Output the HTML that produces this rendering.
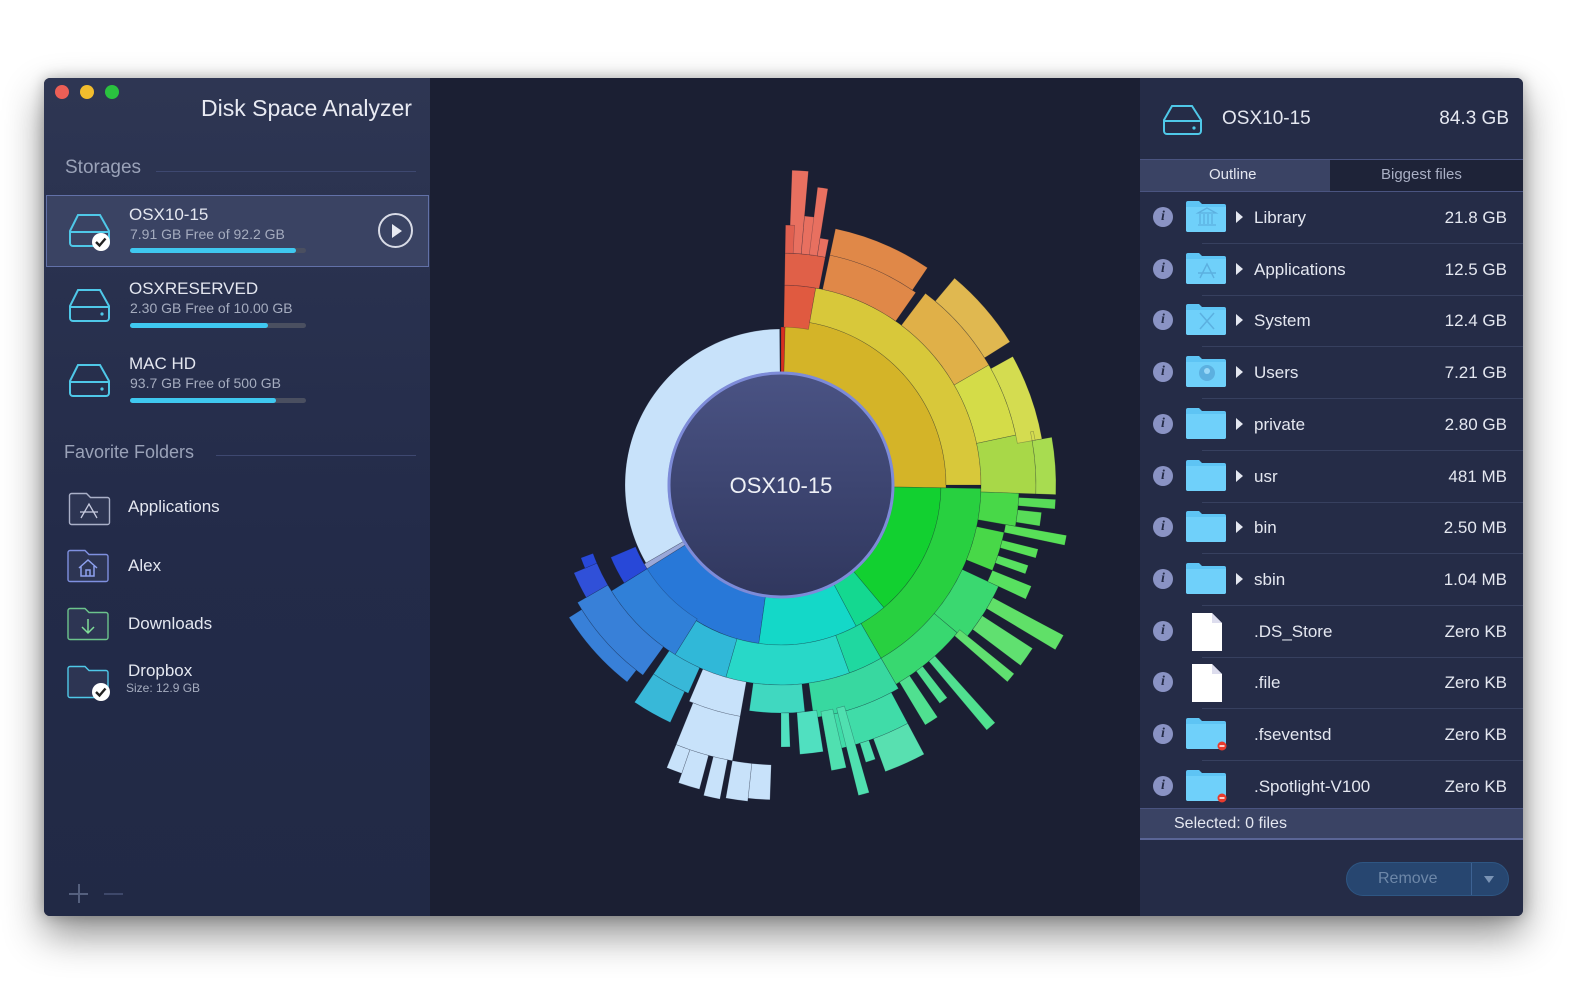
<!DOCTYPE html>
<html><head><meta charset="utf-8">
<style>
*{margin:0;padding:0;box-sizing:border-box}
body{width:1584px;height:1000px;background:#fff;font-family:"Liberation Sans",sans-serif;position:relative;overflow:hidden}
#win{position:absolute;left:44px;top:78px;width:1479px;height:838px;border-radius:6px;overflow:hidden;background:#1b1f33;box-shadow:0 18px 40px rgba(0,0,0,.45),0 0 14px rgba(0,0,0,.25)}
#side{position:absolute;left:0;top:0;width:386px;height:838px;background:linear-gradient(#2e3653,#232b49 55%,#212945)}
.dot{position:absolute;top:7px;width:14px;height:14px;border-radius:50%}
.t{position:absolute;color:#e4e7f0;white-space:nowrap}
.sec{position:absolute;color:#9aa2b8;font-size:19px}
.line{position:absolute;height:1px;background:#3e4870}
.bar{position:absolute;left:86px;width:176px;height:5px;border-radius:3px;background:#4a4f60}
.bar i{display:block;height:5px;border-radius:3px;background:#3fc8f0}
#right{position:absolute;left:1096px;top:0;width:383px;height:838px;background:#252c47}
.row{position:absolute;left:0;width:383px;height:52px}
.row .sep{position:absolute;left:62px;right:0;bottom:0;height:1px;background:#37405f}
.info{position:absolute;left:13px;top:15px;width:20px;height:20px;border-radius:50%;background:#8a93c4;color:#252c47;font:italic bold 14px "Liberation Serif",serif;text-align:center;line-height:20px}
.nm{position:absolute;left:114px;top:16px;font-size:17px;color:#e4e7f0}
.sz{position:absolute;right:16px;top:16px;font-size:17px;color:#e4e7f0}
.tri{position:absolute;left:96px;top:19px;width:0;height:0;border-left:7px solid #e4e7f0;border-top:6px solid transparent;border-bottom:6px solid transparent}
</style></head><body>
<div id="win">
 <div id="side">
  <div class="dot" style="left:11px;background:#ec5f56"></div>
  <div class="dot" style="left:36px;background:#f2bd2d"></div>
  <div class="dot" style="left:61px;background:#2ac23f"></div>
  <div class="t" style="left:157px;top:17px;font-size:23px;color:#e8eaf2">Disk Space Analyzer</div>
  <div class="sec" style="left:21px;top:79px">Storages</div>
  <div class="line" style="left:112px;top:93px;width:260px"></div>
  <div style="position:absolute;left:2px;top:117px;width:383px;height:72px;background:#3a4363;border:1px solid #6271a8"></div>
  <svg style="position:absolute;left:24px;top:134px" width="46" height="40"><path d="M10 3h22l9 16v12a3 3 0 0 1-3 3H5a3 3 0 0 1-3-3V19z M2 20h39" fill="#3a4363" stroke="#4fc8e8" stroke-width="2"/><circle cx="33" cy="30" r="9" fill="#fff"/><path d="M28 30l3.5 3.5 6-7" stroke="#222" stroke-width="2.4" fill="none"/></svg>
  <div class="t" style="left:85px;top:127px;font-size:17px">OSX10-15</div>
  <div class="t" style="left:86px;top:148px;font-size:14px;color:#a5acbf">7.91 GB Free of 92.2 GB</div>
  <div class="bar" style="top:170px"><i style="width:166px"></i></div>
  <div style="position:absolute;left:334px;top:135px;width:35px;height:35px;border-radius:50%;border:2px solid #d8dbe6"></div>
  <div style="position:absolute;left:348px;top:146px;border-left:10px solid #e8eaf2;border-top:7px solid transparent;border-bottom:7px solid transparent"></div>

  <svg style="position:absolute;left:24px;top:209px" width="46" height="36"><path d="M10 3h22l9 16v12a3 3 0 0 1-3 3H5a3 3 0 0 1-3-3V19z M2 20h39" fill="none" stroke="#4fc8e8" stroke-width="2"/><circle cx="34" cy="27" r="1.6" fill="#4fc8e8"/></svg>
  <div class="t" style="left:85px;top:201px;font-size:17px">OSXRESERVED</div>
  <div class="t" style="left:86px;top:222px;font-size:14px;color:#a5acbf">2.30 GB Free of 10.00 GB</div>
  <div class="bar" style="top:245px"><i style="width:138px"></i></div>

  <svg style="position:absolute;left:24px;top:284px" width="46" height="36"><path d="M10 3h22l9 16v12a3 3 0 0 1-3 3H5a3 3 0 0 1-3-3V19z M2 20h39" fill="none" stroke="#4fc8e8" stroke-width="2"/><circle cx="34" cy="27" r="1.6" fill="#4fc8e8"/></svg>
  <div class="t" style="left:85px;top:276px;font-size:17px">MAC HD</div>
  <div class="t" style="left:86px;top:297px;font-size:14px;color:#a5acbf">93.7 GB Free of 500 GB</div>
  <div class="bar" style="top:320px"><i style="width:146px"></i></div>

  <div class="sec" style="left:20px;top:364px;font-size:18px">Favorite Folders</div>
  <div class="line" style="left:172px;top:377px;width:200px"></div>

  <svg style="position:absolute;left:24px;top:414px" width="44" height="34"><path d="M1.5 3.5a2 2 0 0 1 2-2h15l4 4h17a2 2 0 0 1 2 2v23a2 2 0 0 1-2 2h-36a2 2 0 0 1-2-2z" fill="#2d3553" stroke="#aab0c8" stroke-width="1.4"/><path d="M13 26l8-14 8 14M12 20h18" stroke="#c8cce0" stroke-width="1.3" fill="none"/></svg>
  <div class="t" style="left:84px;top:419px;font-size:17px">Applications</div>
  <svg style="position:absolute;left:22px;top:471px" width="46" height="34"><path d="M2 3.5a2 2 0 0 1 2-2h15l4 4h17a2 2 0 0 1 2 2v23a2 2 0 0 1-2 2h-36a2 2 0 0 1-2-2z" fill="#2d3553" stroke="#7f90e0" stroke-width="1.4"/><path d="M13 19l9-8 9 8M15 17v10h13V17M20 27v-6h4v6" stroke="#8da0ee" stroke-width="1.5" fill="none"/></svg>
  <div class="t" style="left:84px;top:478px;font-size:17px">Alex</div>
  <svg style="position:absolute;left:22px;top:529px" width="46" height="34"><path d="M2 3.5a2 2 0 0 1 2-2h15l4 4h17a2 2 0 0 1 2 2v23a2 2 0 0 1-2 2h-36a2 2 0 0 1-2-2z" fill="#2d3553" stroke="#6cc48c" stroke-width="1.4"/><path d="M22 12v14M16 20l6 6 6-6" stroke="#7fdc98" stroke-width="1.5" fill="none"/></svg>
  <div class="t" style="left:84px;top:536px;font-size:17px">Downloads</div>
  <svg style="position:absolute;left:22px;top:587px" width="48" height="38"><path d="M2 3.5a2 2 0 0 1 2-2h15l4 4h17a2 2 0 0 1 2 2v23a2 2 0 0 1-2 2h-36a2 2 0 0 1-2-2z" fill="#2d3553" stroke="#4fc8e8" stroke-width="1.4"/><circle cx="35" cy="27" r="9" fill="#fff"/><path d="M30 27l3.5 3.5 6-7" stroke="#222" stroke-width="2.4" fill="none"/></svg>
  <div class="t" style="left:84px;top:583px;font-size:17px">Dropbox</div>
  <div class="t" style="left:82px;top:603px;font-size:12px;color:#a5acbf">Size: 12.9 GB</div>
  <div style="position:absolute;left:25px;top:815px;width:19px;height:1.5px;background:#55607e"></div>
  <div style="position:absolute;left:34px;top:806px;width:1.5px;height:19px;background:#55607e"></div>
  <div style="position:absolute;left:60px;top:815px;width:19px;height:1.5px;background:#3e486a"></div>
 </div>

 <svg id="chart" style="position:absolute;left:0;top:0" width="1096" height="838"></svg>

 <div id="right">
  <svg style="position:absolute;left:22px;top:26px" width="42" height="32"><path d="M10 2h20l9 14v11a3 3 0 0 1-3 3H5a3 3 0 0 1-3-3V16z M2 17h37" fill="none" stroke="#4fc8e8" stroke-width="2"/><circle cx="32" cy="24" r="1.6" fill="#4fc8e8"/></svg>
  <div class="t" style="left:82px;top:30px;font-size:19px">OSX10-15</div>
  <div class="t" style="right:14px;top:30px;font-size:19px">84.3 GB</div>
  <div style="position:absolute;left:0;top:81px;width:383px;height:1px;background:#4a5480"></div>
  <div style="position:absolute;left:0;top:82px;width:190px;height:31px;background:#3a4364"></div>
  <div style="position:absolute;left:190px;top:82px;width:193px;height:31px;background:#1e2338"></div>
  <div class="t" style="left:69px;top:88px;font-size:15px">Outline</div>
  <div class="t" style="left:241px;top:88px;font-size:15px;color:#a9afc4">Biggest files</div>
  <div style="position:absolute;left:0;top:113px;width:383px;height:1px;background:#4a5480"></div>
  <div id="rows"></div>
  <div style="position:absolute;left:0;top:730px;width:383px;height:32px;background:#3a4364;border-top:1px solid #4a5480;border-bottom:2px solid #5a6596"></div>
  <div class="t" style="left:34px;top:737px;font-size:16px">Selected: 0 files</div>
  <div style="position:absolute;left:206px;top:784px;width:163px;height:34px;border-radius:17px;background:#274670;border:1px solid #2e5683"></div>
  <div style="position:absolute;left:331px;top:785px;width:1px;height:32px;background:#3d6293"></div>
  <div class="t" style="left:238px;top:792px;font-size:16px;color:#6d87a8">Remove</div>
  <div style="position:absolute;left:344px;top:798px;border-top:7px solid #7a93b4;border-left:5px solid transparent;border-right:5px solid transparent"></div>
 </div>
</div>
<script>
var rows=[["Library","21.8 GB","f","lib"],["Applications","12.5 GB","f","app"],["System","12.4 GB","f","x"],["Users","7.21 GB","f","u"],["private","2.80 GB","f"],["usr","481 MB","f"],["bin","2.50 MB","f"],["sbin","1.04 MB","f"],[".DS_Store","Zero KB","d"],[".file","Zero KB","d"],[".fseventsd","Zero KB","r"],[".Spotlight-V100","Zero KB","r"]];
var h="";
rows.forEach(function(r,i){
 var top=114+i*51.7;
 var ic="";
 if(r[2]=="d"){ic='<svg style="position:absolute;left:50px;top:6px" width="34" height="40"><path d="M2 1h20l10 10v28H2z" fill="#fff"/><path d="M22 1v10h10" fill="#dde" /></svg>';}
 else{
  var g="";
  if(r[3]=="lib")g='<path d="M13 13h16M14 14v10M18 14v10M22 14v10M26 14v10M12 25h18M21 8l-9 5h18z" stroke="#5cb0e0" stroke-width="1.3" fill="none"/>';
  if(r[3]=="app")g='<path d="M14 26l7-14 7 14M12 21h18" stroke="#5cb0e0" stroke-width="1.4" fill="none"/>';
  if(r[3]=="x")g='<path d="M14 10l14 16M28 10l-14 16" stroke="#5cb0e0" stroke-width="1.5"/>';
  if(r[3]=="u")g='<circle cx="21" cy="18" r="8" fill="#5cb0e0"/><circle cx="21" cy="16" r="3" fill="#9ad8f8"/>';
  if(r[2]=="r")g='<circle cx="36" cy="29" r="4.5" fill="#e83a2c"/><path d="M33.5 29h5" stroke="#fff" stroke-width="1.5"/>';
  ic='<svg style="position:absolute;left:46px;top:8px" width="42" height="36"><path d="M0 3a2 2 0 0 1 2-2h11l3 3h22a2 2 0 0 1 2 2v24a2 2 0 0 1-2 2H2a2 2 0 0 1-2-2z" fill="#5ec4f4"/><path d="M0 7h40v23a2 2 0 0 1-2 2H2a2 2 0 0 1-2-2z" fill="#6fd0fa"/>'+g+'</svg>';
 }
 h+='<div class="row" style="top:'+top+'px"><div class="info">i</div>'+ic+(r[2]=="f"?'<div class="tri"></div>':'')+'<div class="nm">'+r[0]+'</div><div class="sz">'+r[1]+'</div>'+(i<11?'<div class="sep"></div>':'')+'</div>';
});
document.getElementById("rows").innerHTML=h;

var cx=737,cy=407,s="";
function P(a,r){var t=(a-90)*Math.PI/180;return (cx+r*Math.cos(t)).toFixed(2)+" "+(cy+r*Math.sin(t)).toFixed(2);}
function arc(a0,a1,r0,r1,c){var l=(a1-a0)>180?1:0;s+='<path d="M'+P(a0,r0)+'L'+P(a0,r1)+'A'+r1+' '+r1+' 0 '+l+' 1 '+P(a1,r1)+'L'+P(a1,r0)+'A'+r0+' '+r0+' 0 '+l+' 0 '+P(a0,r0)+'Z" fill="'+c+'" stroke="rgba(20,25,45,.35)" stroke-width=".6"/>';}
var segs=[
[0,1.5,113,158,"#d83020"],[1.5,91,113,165,"#d4b428"],[91,140,113,160,"#12d030"],[140,152,113,160,"#14d890"],[152,188,113,160,"#14d8c8"],[188,238,113,160,"#2878d8"],[238,240,113,158,"#9aa8d8"],[240,359.5,113,156,"#c8e2fa"],
[1,10,158,200,"#e05a40"],[10,90,165,200,"#d8c83a"],[91,150,160,200,"#28d040"],[150,160,160,200,"#1fd8a0"],[160,196,160,200,"#28d8c8"],[196,212,160,200,"#30b8d8"],[212,238,158,200,"#3080d8"],[238,247,158,185,"#2848d8"],
[1,11,200,232,"#e06048"],[12,35,200,235,"#e08848"],[37,60,200,240,"#e0b048"],[60,78,200,240,"#d4dc48"],[78,92,200,255,"#a8d848"],[92,100,200,238,"#48d848"],[102,112,200,228,"#48d848"],[115,130,200,240,"#3ad870"],[130,150,200,230,"#38d870"],[150,172,200,235,"#38d8a0"],[174,188,200,228,"#40d8c0"],[190,203,200,235,"#c8e2fa"],[204,214,200,228,"#38b8d8"],[216,240,200,235,"#3880d8"],[240,247,200,225,"#3050d8"],[247,250,200,213,"#2848d8"],
[12,34,235,262,"#e08848"],[40,58,240,270,"#e0b850"],[61,80,240,265,"#d4dc50"],[80,92,255,275,"#a8dc50"],[78,80,255,258,"#d4dc50"],
[152,170,235,270,"#40dca8"],[190,202,235,280,"#c8e2fa"],[205,214,228,262,"#38b8d8"],[218,238,235,250,"#3880d8"]];
segs.forEach(function(a){arc(a[0],a[1],a[2],a[3],a[4]);});
var sp=[[2,5,232,315,"#e87060"],[5,8,232,270,"#e87060"],[7,9,232,300,"#e87060"],[9,11,232,250,"#e87060"],[1,3,232,260,"#e06050"],
[93,95,238,275,"#58dc58"],[96,99,238,262,"#58dc58"],[100,102,228,290,"#58e058"],[104,106,228,265,"#58e058"],[108,110,228,260,"#58e060"],[112,115,228,270,"#58e060"],[118,121,240,320,"#60e068"],[123,127,240,300,"#60e070"],[129,131,230,300,"#60e070"],[138,140,230,320,"#50e090"],[142,144,230,270,"#50e090"],[146,149,230,280,"#50e090"],
[152,160,270,305,"#58e0b0"],[161,163,270,290,"#50e0b0"],[164,166,230,320,"#50e0b0"],[167,170,230,290,"#50e0b0"],[171,176,228,270,"#50e0c0"],[178,180,228,262,"#50e0c0"],
[182,186,280,315,"#c8e2fa"],[186,190,280,318,"#c8e2fa"],[191,194,280,320,"#c8e2fa"],[195,199,280,315,"#c8e2fa"],[199,202,280,305,"#c8e2fa"]];
sp.forEach(function(a){arc(a[0],a[1],a[2],a[3],a[4]);});
s+='<defs><linearGradient id="cg" x1="0" y1="0" x2="0" y2="1"><stop offset="0" stop-color="#4a5384"/><stop offset="1" stop-color="#30375e"/></linearGradient></defs><circle cx="'+cx+'" cy="'+cy+'" r="112" fill="url(#cg)" stroke="#7d8bd8" stroke-width="3"/><text x="'+cx+'" y="'+(cy+8)+'" text-anchor="middle" font-family="Liberation Sans" font-size="22" fill="#eef0f6">OSX10-15</text>';
document.getElementById("chart").innerHTML=s;
</script>
</body></html>
